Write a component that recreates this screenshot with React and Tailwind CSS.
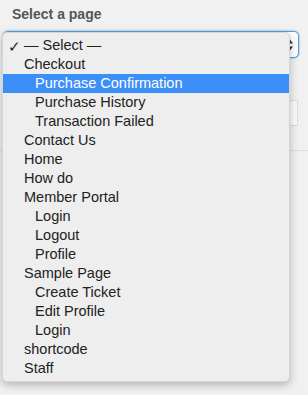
import React from "react";

const options = [
  { label: "— Select —", depth: 0, checked: true },
  { label: "Checkout", depth: 0 },
  { label: "Purchase Confirmation", depth: 1, active: true },
  { label: "Purchase History", depth: 1 },
  { label: "Transaction Failed", depth: 1 },
  { label: "Contact Us", depth: 0 },
  { label: "Home", depth: 0 },
  { label: "How do", depth: 0 },
  { label: "Member Portal", depth: 0 },
  { label: "Login", depth: 1 },
  { label: "Logout", depth: 1 },
  { label: "Profile", depth: 1 },
  { label: "Sample Page", depth: 0 },
  { label: "Create Ticket", depth: 1 },
  { label: "Edit Profile", depth: 1 },
  { label: "Login", depth: 1 },
  { label: "shortcode", depth: 0 },
  { label: "Staff", depth: 0 },
];

const App = () => {
  return (
    <div
      className="relative w-[308px] h-[395px] overflow-hidden bg-[#f1f1f1] text-[#222]"
      style={{ fontFamily: "'Liberation Sans', Arial, sans-serif" }}
    >
      <div className="pl-[12px] pt-[5px] text-[14px] font-bold text-[#555] leading-[18px]">
        Select a page
      </div>

      {/* the select itself, mostly hidden under the open menu */}
      <div className="mt-[8px] ml-[3px] w-[296px] h-[27px] rounded-[5px] border border-[#5b9dd9] bg-white shadow-[0_0_2px_rgba(30,140,190,0.8)] flex items-center justify-end pr-[4px]">
        <svg width="8" height="14" viewBox="0 0 8 14">
          <path d="M1 5.5 L4 1.5 L7 5.5 Z" fill="#333" />
          <path d="M1 8.5 L4 12.5 L7 8.5 Z" fill="#333" />
        </svg>
      </div>

      {/* field behind menu */}
      <div className="mt-[42px] ml-[200px] w-[98px] h-[26px] border border-[#ddd] bg-[#fbfbfb]" />
      <div className="mt-[24px] h-px bg-[#dcdcdc]" />

      {/* open dropdown */}
      <div className="absolute left-[2px] top-[32px] w-[288px] h-[350px] rounded-[5px] bg-[#eeeeee] border border-[#d5d5d5] shadow-[0_3px_8px_rgba(0,0,0,0.25)] pt-[3px] text-[14.5px]">
        {options.map((o, i) => (
          <div
            key={i}
            className={
              "relative h-[19px] leading-[19px] whitespace-nowrap " +
              (o.active ? "bg-[#3b8ff6] text-white" : "text-[#222]")
            }
            style={{ paddingLeft: o.depth ? 32 : 21 }}
          >
            {o.checked && (
              <span className="absolute left-[5px] top-[1px] text-[15px]">✓</span>
            )}
            {o.label}
          </div>
        ))}
      </div>
    </div>
  );
};

export default App;
